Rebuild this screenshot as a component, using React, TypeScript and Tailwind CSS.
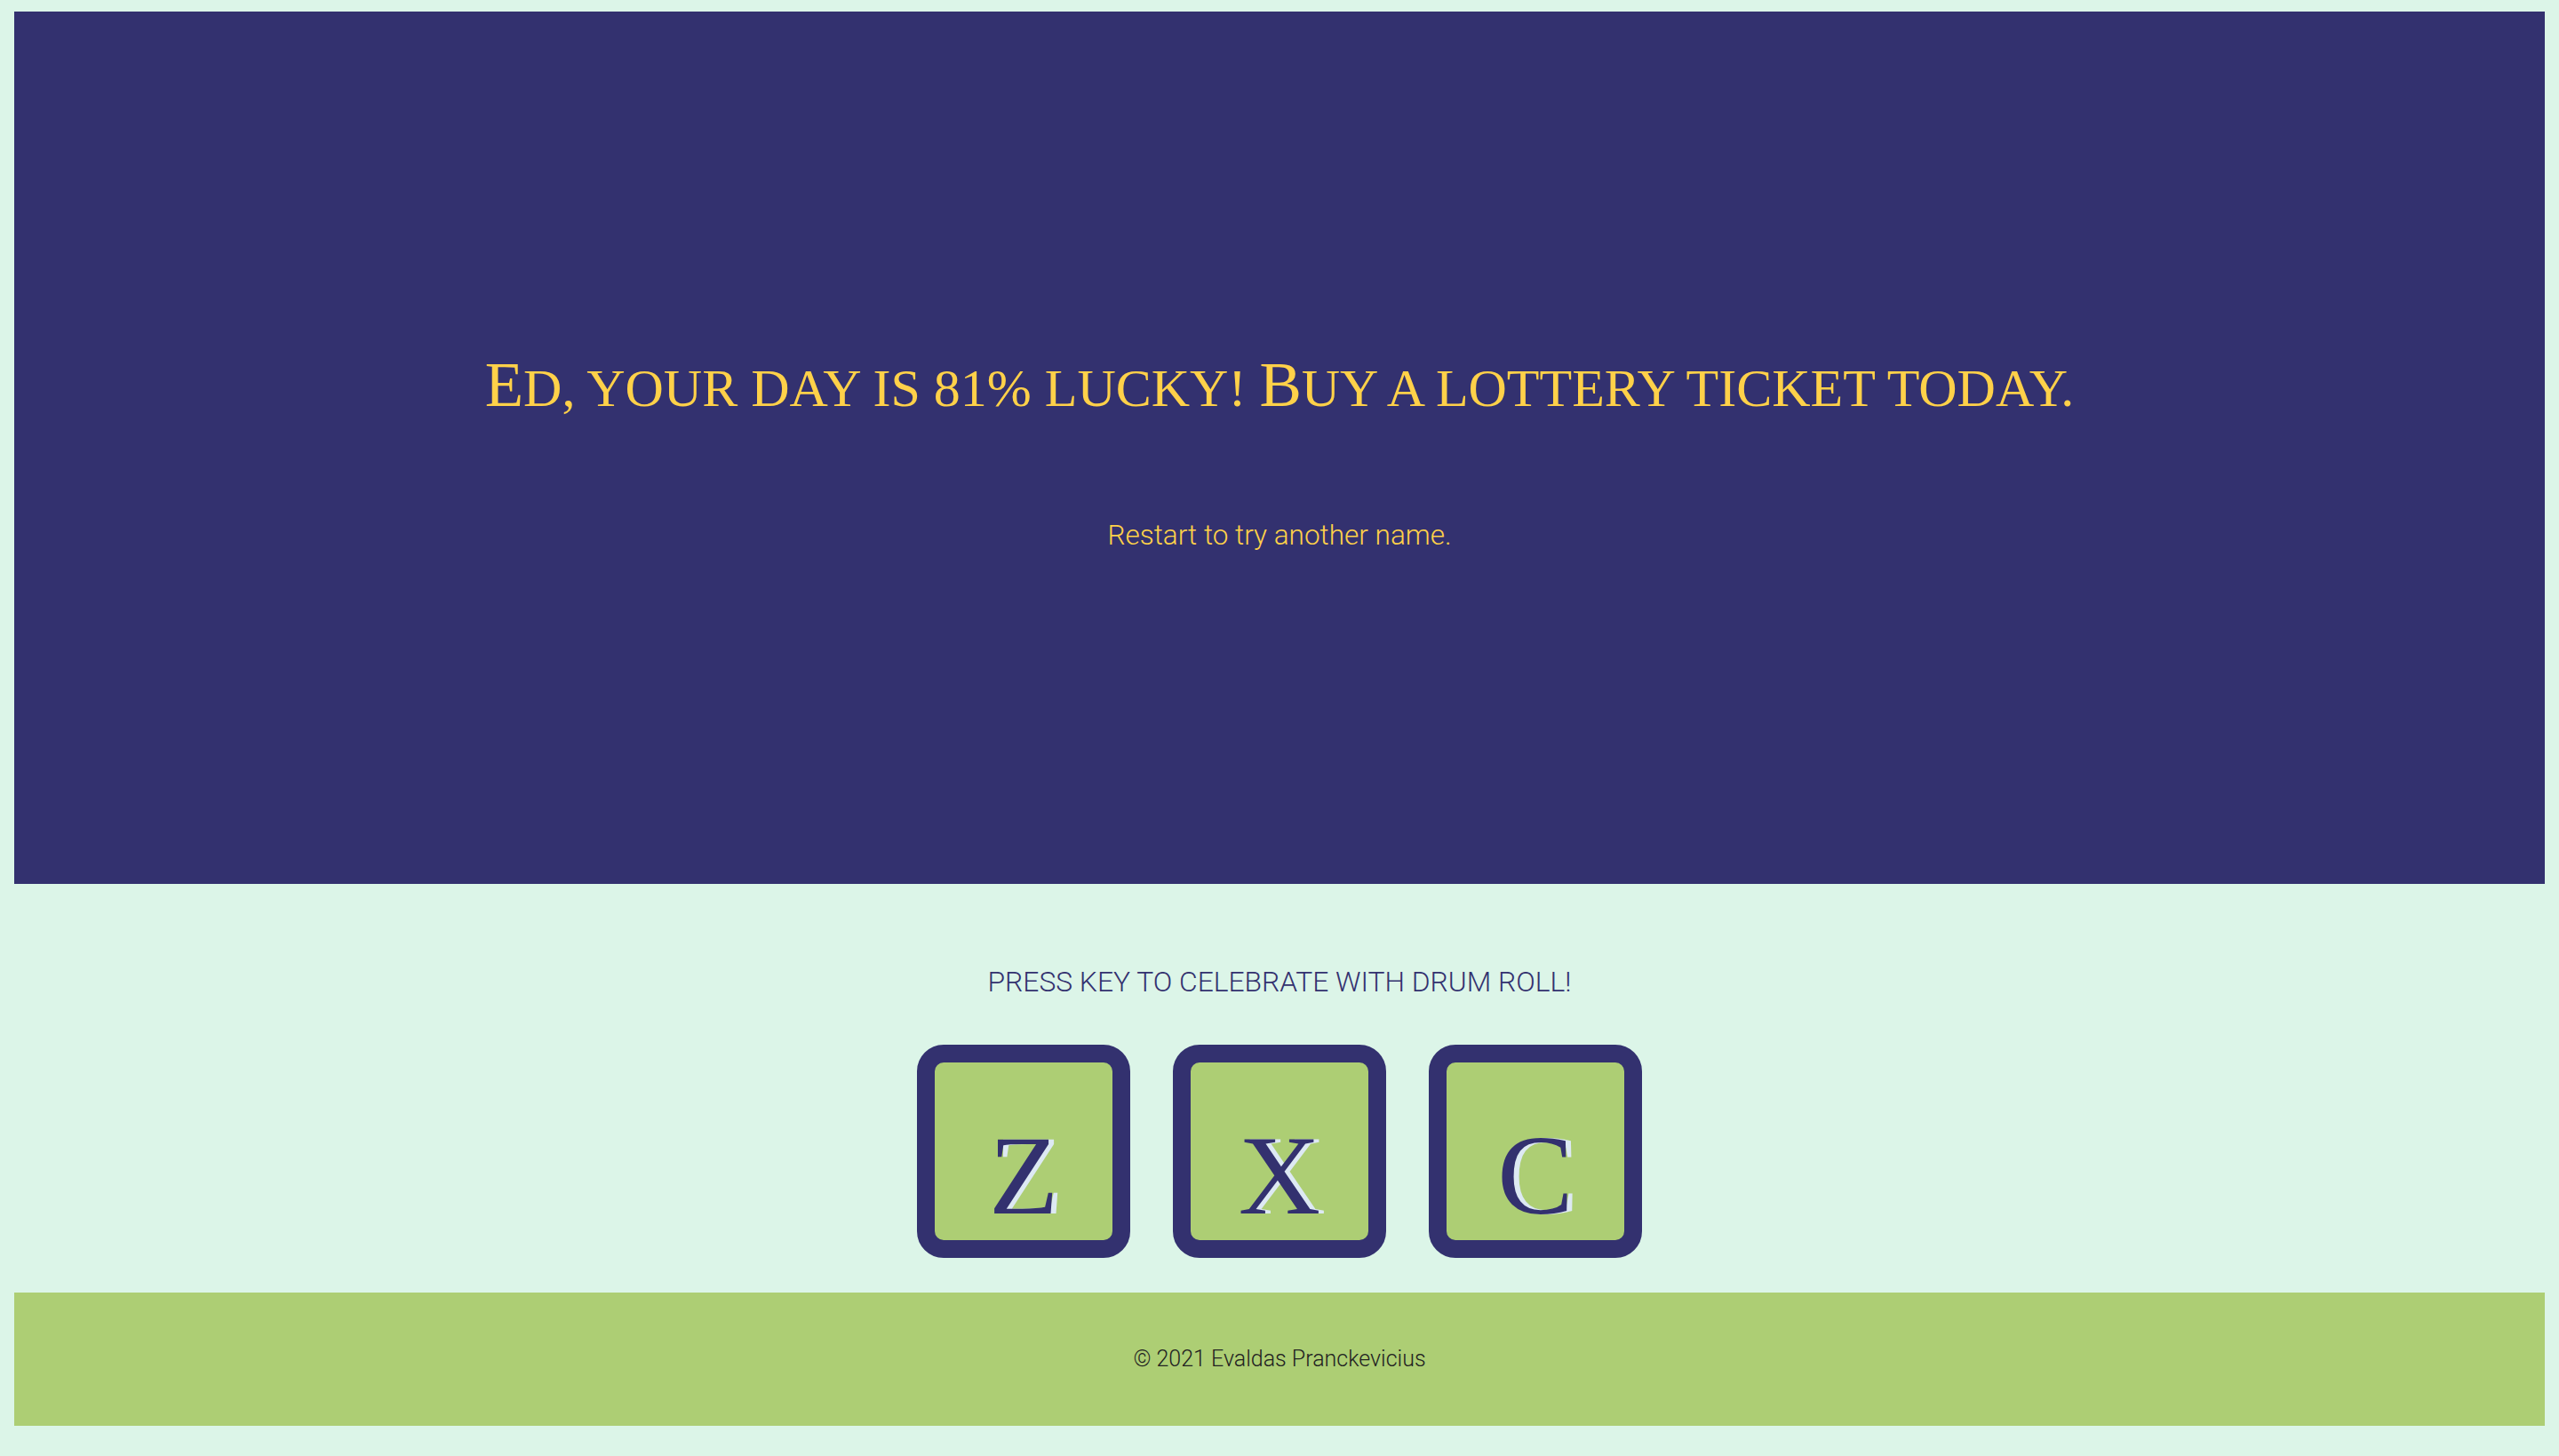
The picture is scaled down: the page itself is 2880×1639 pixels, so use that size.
const keys = ["Z", "X", "C"];

function Key({ letter }: { letter: string }) {
  return (
    <div className="w-[240px] h-[240px] rounded-[30px] border-[20px] border-[#33316f] bg-[#adce74] flex items-end justify-center pb-[9px]">
      <span className="font-['Liberation_Serif',serif] text-[128px] leading-none text-[#33316f] [text-shadow:6px_0_#dde9f3]">
        {letter}
      </span>
    </div>
  );
}

export default function App() {
  return (
    <div className="min-h-screen bg-[#dcf5e8] pt-[13px] pb-8 font-['Roboto',sans-serif]">
      <section className="mx-4 h-[982px] bg-[#33316f] pt-[385px] text-center">
        <h1 className="font-['Liberation_Serif',serif] text-[71px] leading-none text-[#ffd149]">
          E<span className="text-[60px]">D, YOUR DAY IS 81% LUCKY! </span>B
          <span className="text-[60px]">UY A LOTTERY TICKET TODAY.</span>
        </h1>
        <p className="mt-[118px] text-[31.5px] leading-none font-light text-[#ffd149]">
          Restart to try another name.
        </p>
      </section>

      <section className="flex flex-col items-center">
        <p className="mt-[95px] text-[31.8px] leading-none font-light uppercase text-[#33316f]">
          Press key to celebrate with drum roll!
        </p>
        <div className="mt-[54px] flex gap-12">
          {keys.map((k) => (
            <Key key={k} letter={k} />
          ))}
        </div>
      </section>

      <footer className="mx-4 mt-[39px] h-[150px] bg-[#adce74] flex items-center justify-center">
        <p className="text-[25px] leading-none font-light text-[#222]">© 2021 Evaldas Pranckevicius</p>
      </footer>
    </div>
  );
}
